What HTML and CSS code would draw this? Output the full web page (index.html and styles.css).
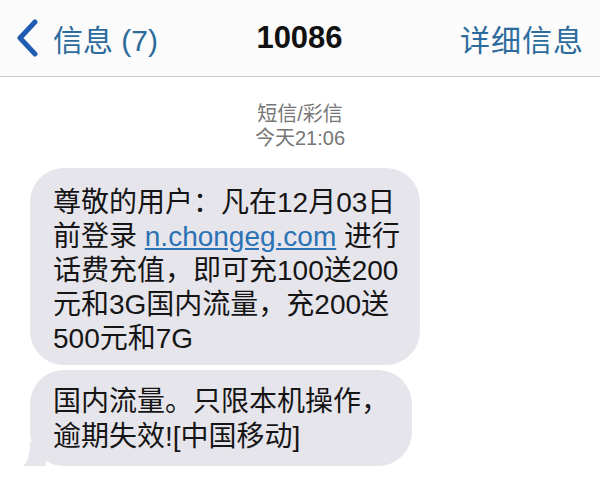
FILE: index.html
```html
<!DOCTYPE html>
<html lang="zh-CN">
<head>
  <meta charset="UTF-8">
  <meta name="viewport" content="width=device-width, initial-scale=1.0">
  <title>10086</title>
  <link rel="stylesheet" href="styles.css">
</head>
<body>
  <!-- Navigation bar -->
  <div class="navbar">
    <div class="nav-back">
      <svg class="chevron" width="24" height="38" viewBox="0 0 24 38">
        <path d="M20 3 L5 19 L20 35" fill="none" stroke="#1f5cb2" stroke-width="5" stroke-linecap="round" stroke-linejoin="round"/>
      </svg>
      <span>信息 (7)</span>
    </div>
    <div class="nav-title">10086</div>
    <div class="nav-detail">详细信息</div>
  </div>

  <!-- Conversation -->
  <div class="thread">
    <div class="stamp">短信/彩信<br>今天21:06</div>

    <div class="bubble first">尊敬的用户：凡在12月03日<br>前登录 <a class="link" href="#">n.chongeg.com</a> 进行<br>话费充值，即可充100送200<br>元和3G国内流量，充200送<br>500元和7G</div>

    <div class="bubble last">国内流量。只限本机操作，<br>逾期失效![中国移动]
      <svg class="tail" width="26" height="28" viewBox="0 0 26 28">
        <path d="M26 0 L26 24 C20 26 10 27 0 27 C7 22 10 14 10 0 Z" fill="#e7e5ec"/>
      </svg>
    </div>
  </div>
</body>
</html>
```

FILE: styles.css
```css
body {
  margin: 0;
  background-color: #fff;
  font-family: "Liberation Sans", "Noto Sans CJK SC", sans-serif;
}
.navbar {
  display: flex;
  align-items: center;
  justify-content: space-between;
  height: 76px;
  padding: 0 16px 0 15px;
  border-bottom: 1px solid #c9c9cb;
  background-color: #fbfbfb;
}
.nav-back {
  display: flex;
  align-items: center;
  gap: 14px;
  color: #2c6c9c;
  font-size: 30px;
  width: 150px;
}
.chevron {
  display: block;
}
.nav-title {
  font-weight: bold;
  font-size: 31px;
  color: #111;
}
.nav-detail {
  width: 150px;
  text-align: right;
  color: #2c6c9c;
  font-size: 30px;
  letter-spacing: 1px;
}
.thread {
  display: flex;
  flex-direction: column;
  align-items: flex-start;
  padding: 25px 0 0 30px;
}
.stamp {
  align-self: stretch;
  margin-left: -30px;
  text-align: center;
  color: #767676;
  font-size: 20px;
  line-height: 24px;
}
.bubble {
  position: relative;
  background-color: #e7e5ec;
  color: #151515;
  font-size: 28px;
  line-height: 34px;
  border-radius: 34px;
  white-space: nowrap;
}
.first {
  margin-top: 18px;
  padding: 18px 20px 9px 23px;
}
.last {
  margin-top: 5px;
  padding: 14px 23px 12px 23px;
  line-height: 35px;
}
.link {
  color: #2a72b4;
  text-decoration: underline;
}
.tail {
  position: absolute;
  left: -10px;
  bottom: -4px;
}
```
